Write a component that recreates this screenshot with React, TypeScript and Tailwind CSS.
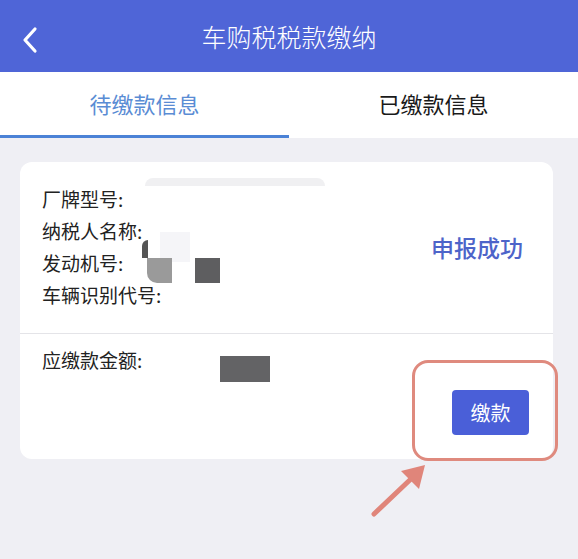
import React from "react";

export default function App() {
  const font = { fontFamily: '"Noto Sans CJK SC", "Noto Sans", sans-serif' };
  return (
    <div className="w-[578px] h-[559px] bg-[#efeff4] overflow-hidden relative" style={font}>
      {/* Header */}
      <div className="h-[72px] bg-[#4f65d7] flex items-center relative">
        <svg className="absolute left-[20px] top-[26px]" width="20" height="28" viewBox="0 0 20 28">
          <path d="M15 3 L5 14 L15 25" stroke="#ffffff" strokeWidth="3.2" fill="none" strokeLinecap="round" strokeLinejoin="round" />
        </svg>
        <div className="w-full text-center text-white text-[25px] leading-none font-light">车购税税款缴纳</div>
      </div>
      {/* Tabs */}
      <div className="h-[66px] bg-white flex">
        <div className="flex-1 flex flex-col">
          <div className="flex-1 flex items-center justify-center text-[22px] text-[#5a8cd4]">待缴款信息</div>
          <div className="h-[3px] bg-[#4b82d6]" />
        </div>
        <div className="flex-1 flex flex-col">
          <div className="flex-1 flex items-center justify-center text-[22px] text-[#1a1a1a]">已缴款信息</div>
          <div className="h-[3px] bg-white" />
        </div>
      </div>
      {/* Card */}
      <div className="pl-[20px] pr-[25px] pt-[24px]">
        <div className="bg-white rounded-[12px] relative">
          <div className="flex items-center pl-[22px] pr-[30px] pt-[21px] pb-[22px] relative">
            <div className="flex-1 text-[19px] leading-[32px] text-[#222]">
              <div>厂牌型号:</div>
              <div>纳税人名称:</div>
              <div>发动机号:</div>
              <div>车辆识别代号:</div>
            </div>
            <div className="text-[23px] font-medium text-[#4d64c9]">申报成功</div>
            {/* censor marks */}
            <div className="absolute left-[125px] top-[16px] w-[180px] h-[8px] rounded-t-full bg-[#f0f0f2]" />
            <div className="absolute left-[122px] top-[78px] w-[6px] h-[18px] rounded-tl-full bg-[#555]" />
            <div className="absolute left-[140px] top-[70px] w-[30px] h-[30px] bg-[#f5f5f8]" />
            <div className="absolute left-[127px] top-[96px] w-[25px] h-[25px] rounded-bl-[10px] bg-[#9a9a9a]" />
            <div className="absolute left-[175px] top-[96px] w-[25px] h-[25px] bg-[#5e5e60]" />
          </div>
          <div className="h-px bg-[#e4e4e8]" />
          <div className="pl-[22px] pr-[24px] pt-[10px] pb-[24px]">
            <div className="flex items-start">
              <div className="text-[19px] leading-[32px] text-[#222]">应缴款金额:</div>
              <div className="ml-[78px] mt-[12px] w-[50px] h-[26px] bg-[#636365]" />
            </div>
            <div className="flex justify-end mt-[8px]">
              <div className="w-[77px] h-[45px] rounded-[4px] bg-[#4a5fd8] flex items-center justify-center text-white text-[20px]">缴款</div>
            </div>
          </div>
        </div>
      </div>
      {/* Highlight box */}
      <div className="absolute left-[412px] top-[360px] w-[146px] h-[101px] border-[3px] border-[#df8a7e] rounded-[16px]" />
      {/* Arrow */}
      <svg className="absolute left-[365px] top-[455px]" width="70" height="70" viewBox="0 0 70 70">
        <line x1="9" y1="59" x2="48" y2="22" stroke="#e0857a" strokeWidth="5" strokeLinecap="round" />
        <polygon points="60,10 36,16 54,34" fill="#e0857a" />
      </svg>
    </div>
  );
}
